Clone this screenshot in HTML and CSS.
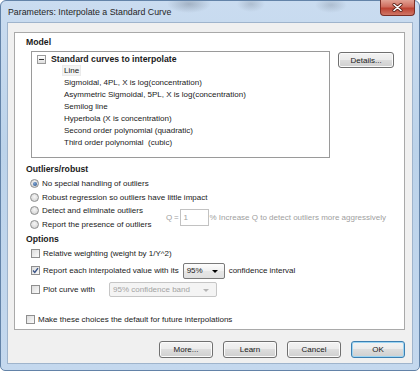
FILE: index.html
```html
<!DOCTYPE html>
<html lang="en">

<head>
    <meta charset="UTF-8">
    <title>Parameters: Interpolate a Standard Curve</title>
    <link rel="stylesheet" href="styles.css">
</head>

<body>

    <div class="window">
        <div class="titlebar">
            <span class="title">Parameters: Interpolate a Standard Curve</span>
            <div class="close-btn">
                <svg width="11" height="9" viewBox="0 0 11 9">
                    <path d="M2 1.5 L9 7.5 M9 1.5 L2 7.5" stroke="#5b2219" stroke-width="3.2" stroke-linecap="round" />
                    <path d="M2 1.5 L9 7.5 M9 1.5 L2 7.5" stroke="#ffffff" stroke-width="1.6" stroke-linecap="round" />
                </svg>
            </div>
        </div>

        <div class="client">
            <div class="panel">
                <div class="group-title">Model</div>
                <div class="model-row">
                    <div class="tree">
                        <div class="tree-root"><span class="expander"></span>Standard curves to interpolate</div>
                        <div class="tree-item"><span class="selected">Line</span></div>
                        <div class="tree-item">Sigmoidal, 4PL, X is log(concentration)</div>
                        <div class="tree-item">Asymmetric Sigmoidal, 5PL, X is log(concentration)</div>
                        <div class="tree-item">Semilog line</div>
                        <div class="tree-item">Hyperbola (X is concentration)</div>
                        <div class="tree-item">Second order polynomial (quadratic)</div>
                        <div class="tree-item">Third order polynomial &nbsp;(cubic)</div>
                    </div>
                    <div class="btn details-btn">Details...</div>
                </div>

                <div class="group-title outliers-title">Outliers/robust</div>
                <div class="radio-grid">
                    <div class="radio-row"><span class="radio checked"></span>No special handling of outliers</div>
                    <div class="radio-row"><span class="radio"></span>Robust regression so outliers have little impact</div>
                    <div class="radio-row"><span class="radio"></span>Detect and eliminate outliers</div>
                    <div class="radio-row"><span class="radio"></span>Report the presence of outliers</div>
                    <div class="q-field">
                        <span class="q-label">Q =</span>
                        <span class="q-input">1</span>
                        <span>% Increase Q to detect outliers more aggressively</span>
                    </div>
                </div>

                <div class="group-title options-title">Options</div>
                <div class="check-row row-weight">
                    <span class="checkbox"></span>Relative weighting (weight by 1/Y^2)
                </div>
                <div class="check-row row-report">
                    <span class="checkbox checked">
                        <svg width="7" height="7" viewBox="0 0 7 7">
                            <path d="M1 3.6 L2.8 5.5 L6 1.2" fill="none" stroke="#3a5487" stroke-width="1.4" />
                        </svg>
                    </span>
                    Report each interpolated value with its
                    <span class="combo combo-level">95%<span class="arrow"></span></span>
                    confidence interval
                </div>
                <div class="check-row row-plot">
                    <span class="checkbox"></span><span class="plot-label">Plot curve with</span>
                    <span class="combo combo-band disabled">95% confidence band<span class="arrow"></span></span>
                </div>
                <div class="check-row row-default">
                    <span class="checkbox"></span>Make these choices the default for future interpolations
                </div>
            </div>

            <div class="button-row">
                <div class="btn">More...</div>
                <div class="btn">Learn</div>
                <div class="btn">Cancel</div>
                <div class="btn btn-default">OK</div>
            </div>
        </div>
    </div>

</body>

</html>
```

FILE: styles.css
```css
body {
    margin: 0;
    background-color: #fff;
    font-family: 'Liberation Sans', Arial, sans-serif;
    font-size: 8px;
    color: #1a1a1a;
}

.window {
    width: 420px;
    height: 371px;
    box-sizing: border-box;
    border: 1px solid #6383a8;
    border-radius: 6px 6px 5px 5px;
    padding: 0 6px 6px 6px;
    display: flex;
    flex-direction: column;
    background:
        radial-gradient(ellipse 22px 9px at 188px 3px, rgba(90, 100, 115, 0.35), transparent),
        radial-gradient(ellipse 14px 8px at 250px 3px, rgba(90, 100, 115, 0.25), transparent),
        radial-gradient(ellipse 16px 8px at 330px 4px, rgba(90, 100, 115, 0.25), transparent),
        linear-gradient(#cadcf0, #bcd3ea 40%, #c4d8ee);
}

.titlebar {
    height: 21px;
    display: flex;
    align-items: center;
    margin-right: -2px;
}

.title {
    font-size: 8.8px;
    color: #262626;
    padding-left: 1px;
    padding-top: 1px;
}

.close-btn {
    margin-left: auto;
    align-self: flex-start;
    margin-top: -1px;
    width: 35px;
    height: 16px;
    box-sizing: border-box;
    border: 1px solid #7a2e25;
    border-top: none;
    border-radius: 0 0 4px 4px;
    background: linear-gradient(#e2a294, #cf6d5e 45%, #bd4332 55%, #cf7666);
    display: flex;
    align-items: center;
    justify-content: center;
}

.client {
    flex: 1;
    background-color: #f0f0f0;
    border: 1px solid #9fb4cc;
    display: flex;
    flex-direction: column;
}

.panel {
    margin: 9px 7px 0 6px;
    height: 298px;
    box-sizing: border-box;
    border: 1px solid #a9a9a9;
    background-color: #fff;
    padding: 3px 10px 0 11px;
}

.group-title {
    font-weight: bold;
    font-size: 8.7px;
    height: 12px;
    line-height: 12px;
}

.model-row {
    display: flex;
    align-items: flex-start;
    margin-top: 3px;
}

.tree {
    margin-left: 5px;
    width: 300px;
    height: 107px;
    box-sizing: border-box;
    border: 1px solid #9a9a9a;
    padding: 1px 0 0 5px;
    line-height: 12px;
}

.tree-root {
    font-weight: bold;
    font-size: 8.7px;
    display: flex;
    align-items: center;
}

.expander {
    width: 9px;
    height: 9px;
    box-sizing: border-box;
    border: 1px solid #9a9a9a;
    background: linear-gradient(#ffffff, #dedede);
    margin-right: 5px;
    position: relative;
}

.expander::after {
    content: '';
    position: absolute;
    left: 1px;
    top: 3px;
    width: 5px;
    height: 1px;
    background-color: #333;
}

.tree-item {
    padding-left: 27px;
    height: 12px;
}

.tree-item .selected {
    background-color: #f3f3f3;
    outline: 1px solid #ebebeb;
    padding: 0 1px;
    margin-left: -1px;
}

.btn {
    width: 54px;
    height: 17px;
    box-sizing: border-box;
    border: 1px solid #707070;
    border-radius: 3px;
    background: linear-gradient(#f3f3f3, #ebebeb 50%, #dddddd 50%, #cfcfcf);
    box-shadow: inset 0 0 0 1px #fbfbfb;
    display: flex;
    align-items: center;
    justify-content: center;
    font-size: 8px;
}

.details-btn {
    width: 56px;
    height: 16px;
    margin-left: 8px;
    margin-top: 1px;
}

.outliers-title {
    margin-top: 5px;
}

.radio-grid {
    margin-top: 2px;
    margin-left: 4px;
    display: grid;
    grid-template-columns: 136px 1fr;
    grid-template-rows: 13px 14px 13px 14px;
}

.radio-row {
    grid-column: 1;
    display: flex;
    align-items: center;
    white-space: nowrap;
}

.radio {
    width: 9px;
    height: 9px;
    box-sizing: border-box;
    border-radius: 50%;
    border: 1px solid #8e8f8f;
    background: radial-gradient(circle at 50% 40%, #f6f6f6, #cdcdcd);
    margin-right: 3px;
    flex-shrink: 0;
    display: flex;
    align-items: center;
    justify-content: center;
}

.radio.checked::after {
    content: '';
    width: 4px;
    height: 4px;
    border-radius: 50%;
    background: radial-gradient(circle at 40% 35%, #7fa6d6, #1f4a82);
}

.q-field {
    grid-column: 2;
    grid-row: 3 / span 2;
    align-self: center;
    display: flex;
    align-items: center;
    color: #a0a0a0;
    white-space: nowrap;
}

.q-label {
    margin-right: 1px;
    letter-spacing: -0.2px;
}

.q-input {
    width: 29px;
    height: 17px;
    box-sizing: border-box;
    border: 1px solid #c2c2c2;
    background-color: #fff;
    padding-left: 3px;
    display: flex;
    align-items: center;
    margin-right: 1px;
}

.options-title {
    margin-top: 2px;
}

.check-row {
    display: flex;
    align-items: center;
    margin-top: 2px;
    margin-left: 5px;
    white-space: nowrap;
}

.row-weight {
    height: 13px;
}

.row-report {
    height: 17px;
}

.row-plot {
    height: 16px;
}

.row-default {
    height: 13px;
    margin-top: 16px;
    margin-left: 0;
}

.checkbox {
    width: 9px;
    height: 9px;
    box-sizing: border-box;
    border: 1px solid #8f8f8f;
    background: linear-gradient(135deg, #dcdcdc, #fbfbfb);
    margin-right: 3px;
    flex-shrink: 0;
    display: flex;
    align-items: center;
    justify-content: center;
}

.plot-label {
    width: 66px;
}

.combo {
    height: 16px;
    box-sizing: border-box;
    border: 1px solid #7a7a7a;
    border-radius: 2px;
    background: linear-gradient(#fdfdfd, #f0f0f0 50%, #e6e6e6 50%, #e0e0e0);
    display: flex;
    align-items: center;
    padding-left: 3px;
    position: relative;
}

.combo-level {
    width: 42px;
    margin: 0 4px 0 4px;
}

.combo-band {
    width: 108px;
    height: 15px;
}

.combo.disabled {
    border-color: #c6c6c6;
    background: #f4f4f4;
    color: #a3a3a3;
}

.arrow {
    position: absolute;
    right: 6px;
    top: 6px;
    width: 0;
    height: 0;
    border-left: 3px solid transparent;
    border-right: 3px solid transparent;
    border-top: 3px solid #000;
}

.combo-band .arrow {
    right: 7px;
    border-top-color: #b5b5b5;
}

.button-row {
    display: flex;
    justify-content: flex-end;
    gap: 10px;
    margin: 11px 7px 0 0;
}

.btn-default {
    border-color: #3c7fb1;
    box-shadow: inset 0 0 0 1px #9dd5f3;
}
```
